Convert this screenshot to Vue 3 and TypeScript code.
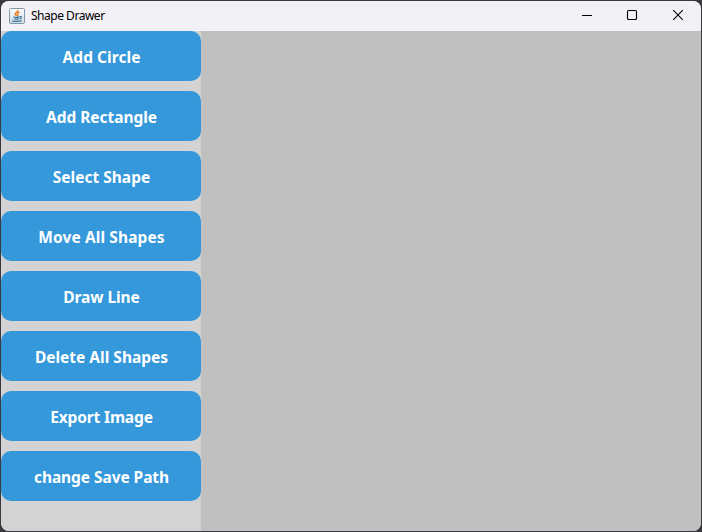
<script setup lang="ts">
interface Action {
  label: string
  spacing: number
}

const actions: Action[] = [
  { label: 'Add Circle', spacing: 0.05 },
  { label: 'Add Rectangle', spacing: -0.04 },
  { label: 'Select Shape', spacing: 0 },
  { label: 'Move All Shapes', spacing: 0.1 },
  { label: 'Draw Line', spacing: -0.1 },
  { label: 'Delete All Shapes', spacing: 0 },
  { label: 'Export Image', spacing: -0.15 },
  { label: 'change Save Path', spacing: -0.07 },
]
</script>

<template>
  <div class="desktop">
    <div class="window">
      <header class="titlebar">
        <svg class="app-icon" width="16" height="16" viewBox="0 0 16 16">
          <defs>
            <linearGradient id="tile" x1="0" y1="0" x2="0" y2="1">
              <stop offset="0" stop-color="#fbfcfd" />
              <stop offset="1" stop-color="#cddbe5" />
            </linearGradient>
          </defs>
          <rect x="0.5" y="0.5" width="15" height="15" rx="1" fill="url(#tile)" stroke="#8197a8" />
          <path d="M9 2C9.5 3.9 5.5 4.6 6.2 6.2C6.5 6.9 7.3 7.2 7.4 8M10.4 4.2C8.6 4.9 7.8 5.5 8.6 6.4C9 6.9 8.8 7.5 8.3 8" fill="none" stroke="#ee7a1c" stroke-width="1.4" />
          <path d="M4.3 8.7C5.8 9.4 8.6 9.3 10.4 8.8M5.1 10.7C6.5 11.3 8.5 11.2 9.7 10.7M10.6 8.6C13.2 8 12.7 10.4 10.6 10.8M3.3 12.4C3.3 13.6 10.9 13.7 12.6 12.5" fill="none" stroke="#44769c" stroke-width="1.25" />
        </svg>
        <span class="title">Shape Drawer</span>
        <div class="controls">
          <svg class="control" width="46" height="30" viewBox="0 0 46 30">
            <path d="M18 14.5H28" />
          </svg>
          <svg class="control" width="46" height="30" viewBox="0 0 46 30">
            <rect x="17.5" y="9.5" width="9" height="9" rx="1" />
          </svg>
          <svg class="control" width="46" height="30" viewBox="0 0 46 30">
            <path d="M17.2 9.2L26.8 18.8M26.8 9.2L17.2 18.8" />
          </svg>
        </div>
      </header>
      <div class="body">
        <nav class="sidebar">
          <button v-for="action in actions" :key="action.label" class="action" type="button">
            <span :style="{ letterSpacing: action.spacing + 'px' }">{{ action.label }}</span>
          </button>
        </nav>
        <main class="canvas"></main>
      </div>
    </div>
  </div>
</template>

<style>
body {
  background: #303034;
}
</style>

<style scoped>
.desktop {
  box-sizing: border-box;
  width: 702px;
  height: 532px;
  padding: 1px;
  background: #39393d;
}
.window {
  display: flex;
  flex-direction: column;
  height: 530px;
  border-radius: 8px;
  overflow: hidden;
  background: #d3d3d3;
}
.titlebar {
  display: flex;
  align-items: center;
  flex: 0 0 30px;
  padding-left: 8px;
  background: #f3f1f8;
}
.app-icon {
  flex: none;
}
.title {
  margin-left: 6px;
  font: 12px/30px 'Noto Sans', sans-serif;
  letter-spacing: -0.48px;
  color: #000;
}
.controls {
  display: flex;
  margin-left: auto;
  margin-right: -1px;
}
.control {
  fill: none;
  stroke: #000;
  stroke-width: 1.1;
}
.body {
  display: flex;
  flex: 1;
}
.sidebar {
  display: flex;
  flex-direction: column;
  gap: 10px;
  width: 200px;
  background: #d3d3d3;
}
.action {
  display: flex;
  align-items: center;
  justify-content: center;
  width: 200px;
  height: 50px;
  padding: 2px 0 0 1px;
  border: 0;
  border-radius: 10px;
  background: #3498db;
  color: #fff;
  font: 700 15.5px/22px 'Noto Sans', sans-serif;
  white-space: nowrap;
}
.canvas {
  flex: 1;
  background: #c0c0c0;
}
</style>
